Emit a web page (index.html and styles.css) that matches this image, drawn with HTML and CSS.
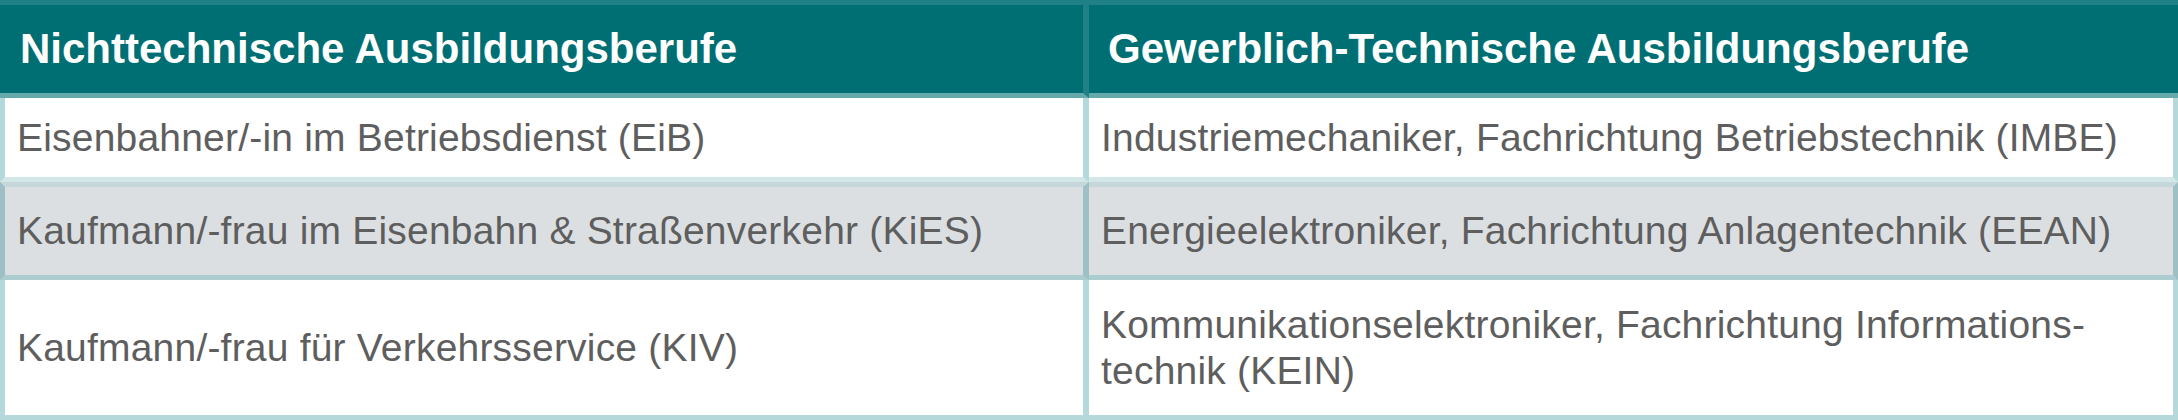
FILE: index.html
```html
<!DOCTYPE html>
<html lang="de">
<head>
<meta charset="utf-8">
<title>Ausbildungsberufe</title>
<link rel="stylesheet" href="styles.css">
</head>
<body>
<div class="table" role="table">
  <div class="th c1" role="columnheader">Nichttechnische Ausbildungsberufe</div>
  <div class="th c2" role="columnheader">Gewerblich-Technische Ausbildungsberufe</div>

  <div class="td c1 r1" role="cell">Eisenbahner/-in im Betriebsdienst (EiB)</div>
  <div class="td c2 r1" role="cell">Industriemechaniker, Fachrichtung Betriebstechnik (IMBE)</div>

  <div class="td c1 r2" role="cell">Kaufmann/-frau im Eisenbahn &amp; Straßenverkehr (KiES)</div>
  <div class="td c2 r2" role="cell">Energieelektroniker, Fachrichtung Anlagentechnik (EEAN)</div>

  <div class="td c1 r3" role="cell">Kaufmann/-frau für Verkehrsservice (KIV)</div>
  <div class="td c2 r3" role="cell">Kommunikationselektroniker, Fachrichtung Informations-<br>technik (KEIN)</div>
</div>
</body>
</html>
```
FILE: styles.css
```css
html, body {
  margin: 0;
  padding: 0;
  background: #ffffff;
}

.table {
  display: grid;
  grid-template-columns: 1089px 1089px;
  grid-template-rows: 98px 84px 98px 140px;
  width: 2178px;
  font-family: "Liberation Sans", Arial, Helvetica, sans-serif;
}

.th, .td {
  box-sizing: border-box;
  display: flex;
  align-items: center;
  white-space: nowrap;
}

.th {
  background: #006f74;
  color: #ffffff;
  font-weight: bold;
  font-size: 42px;
  line-height: 48px;
  border-top: 5px solid #1f8085;
  border-bottom: 5px solid #65a9ab;
}

.th.c1 {
  padding-left: 20px;
  border-right: 6px solid #1f8085;
}

.th.c2 {
  padding-left: 19px;
}

.td {
  color: #5e5e5e;
  font-size: 39px;
  line-height: 46px;
  letter-spacing: 0.2px;
  padding-left: 12px;
}

.td.c1 {
  border-left: 5px solid #b5d9db;
  border-right: 6px solid #b5d9db;
}

.td.c2 {
  border-right: 5px solid #b5d9db;
}

.td.r1 {
  background: #ffffff;
  border-bottom: 5px solid #d3e6e8;
}

.td.r2 {
  background: #dcdfe2;
  border-top: 5px solid #c5d7da;
  border-bottom: 5px solid #abcdd0;
  border-left-color: #9ebfc3;
  border-right-color: #9ebfc3;
}

.td.r3 {
  background: #ffffff;
  border-bottom: 5px solid #b5d9db;
}
```
